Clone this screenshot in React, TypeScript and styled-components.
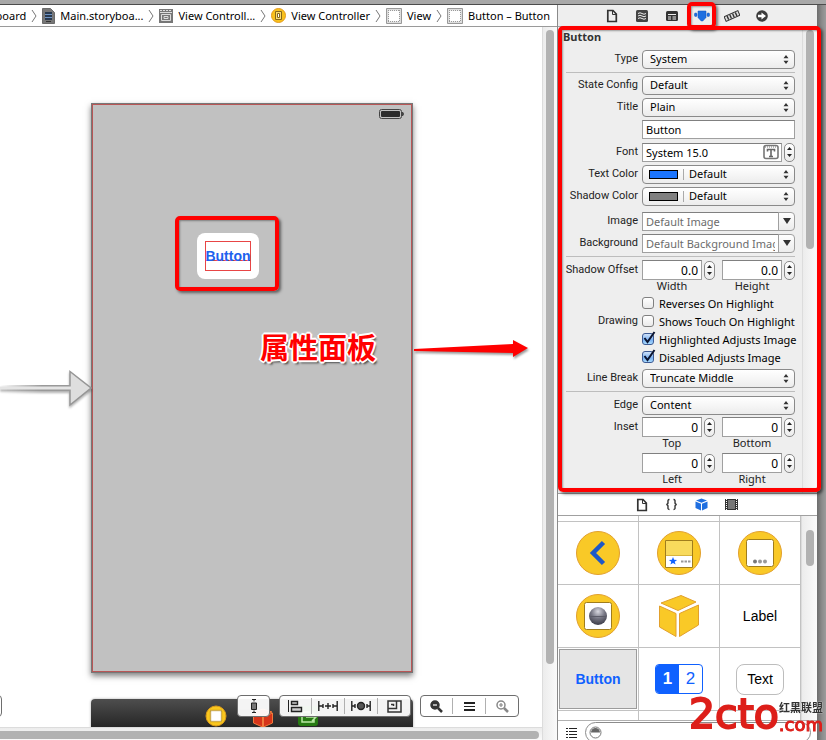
import React from "react";
import styled, { createGlobalStyle, css } from "styled-components";

const ui = `"Noto Sans", "Open Sans", sans-serif`;
const helvetica = `"Liberation Sans", Arial, sans-serif`;
const red = "#ff0000";

const GlobalStyle = createGlobalStyle`
  *, *::before, *::after { box-sizing: border-box; }
  html, body { margin: 0; padding: 0; }
  body { font-family: ${ui}; font-size: 11px; color: #000; background: #fff; overflow: hidden; }
  button, input, select { font: inherit; color: inherit; margin: 0; }
  button { padding: 0; border: 0; background: none; display: block; }
  svg { display: block; flex: none; }
`;

/* ---------- window frame ---------- */

const Window = styled.div`
  height: 100vh;
  display: flex;
  flex-direction: column;
  overflow: hidden;
`;
const TitleEdge = styled.div`
  flex: none;
  height: 5px;
  background: #a8a8a8;
  border-bottom: 1px solid #4c4c4c;
`;
const Body = styled.div`
  flex: 1;
  min-height: 0;
  display: flex;
`;
const Backdrop = styled.div`
  flex: none;
  width: 9px;
  background: linear-gradient(to right, #6c6c6c, #8c8c8c 5px, #9c9c9c);
`;

/* ---------- editor ---------- */

const Editor = styled.main`
  flex: 1;
  min-width: 0;
  display: grid;
  grid-template: 22px minmax(0, 1fr) 13px / minmax(0, 1fr) 15px;
`;
const JumpBar = styled.nav`
  grid-column: 1 / -1;
  display: flex;
  justify-content: flex-end;
  align-items: center;
  gap: 5px;
  padding-right: 7px;
  overflow: hidden;
  border-bottom: 1px solid #9a9a9a;
`;
const Crumb = styled.button`
  flex: none;
  display: flex;
  align-items: center;
  gap: 5px;
  white-space: nowrap;
  line-height: 20px;
`;
const Canvas = styled.section`
  position: relative;
  overflow: hidden;
  background: #fff;
`;
const VTrack = styled.div`
  flex: none;
  width: 15px;
  padding: 3px 3px 0;
  border-left: 1px solid #dcdcdc;
  background: linear-gradient(to right, #ececec, #fafafa);
`;
const EditorVTrack = styled(VTrack)`
  grid-row: 2 / 4;
  grid-column: 2;
  padding-bottom: 76px;
`;
const HTrack = styled.div`
  grid-row: 3;
  grid-column: 1;
  padding: 3px 3px 1px 0;
  border-top: 1px solid #dcdcdc;
  background: linear-gradient(#ececec, #fafafa);
`;
const Thumb = styled.div<{ $h?: number; $end?: boolean }>`
  height: ${(p) => (p.$h ? `${p.$h}px` : "100%")};
  background: #b2b2b2;
  border-radius: ${(p) => (p.$end ? "0 4px 4px 0" : "4px")};
`;

/* Scene objects sit freely on the storyboard canvas */
const Scene = styled.div`
  position: absolute;
  left: 91px;
  top: 76px;
  width: 322px;
  height: 570px;
  border: 1px solid #777;
  background: #c1c1c1;
  box-shadow: inset 0 0 0 1px #b85656, 0 3px 6px rgba(0, 0, 0, 0.5);
`;
const Battery = styled.svg`
  position: absolute;
  right: 7px;
  top: 5px;
`;
const EntryArrow = styled.svg`
  position: absolute;
  left: 0;
  top: 340px;
  filter: drop-shadow(0 2px 1px rgba(0, 0, 0, 0.3));
`;
const Handle = styled.div`
  position: absolute;
  left: 197px;
  top: 206px;
  padding: 8px;
  border-radius: 8px;
  background: #fff;
`;
const CanvasButton = styled.button`
  width: 46px;
  height: 30px;
  border: 1px solid #e84545;
  background: linear-gradient(#e84545, #e84545) 0 18px / 100% 1px no-repeat;
  display: flex;
  justify-content: center;
  align-items: center;
  font: bold 14px / 28px ${helvetica};
  color: #1d62ee;
`;
const Marker = styled.div`
  position: absolute;
  z-index: 5;
  border: 4px solid ${red};
  border-radius: 5px;
  box-shadow: 2px 2px 3px rgba(0, 0, 0, 0.5), inset 1px 1px 2px rgba(0, 0, 0, 0.35);
  pointer-events: none;
`;
const ButtonMarker = styled(Marker)`
  left: 175px;
  top: 189px;
  width: 104px;
  height: 75px;
`;
const Note = styled.p`
  position: absolute;
  left: 260px;
  top: 299px;
  margin: 0;
  font: bold 29px / 40px "Noto Sans CJK SC", sans-serif;
  color: ${red};
  text-shadow: -1px -1px 0 #fff, 1px -1px 0 #fff, -1px 1px 0 #fff, 1px 1px 0 #fff,
    -2px 0 0 #fff, 2px 0 0 #fff, 0 -2px 0 #fff, 0 2px 0 #fff, 2px 3px 2px rgba(0, 0, 0, 0.6);
`;
const NoteArrow = styled.svg`
  position: absolute;
  left: 413px;
  top: 304px;
  filter: drop-shadow(1px 2px 1px rgba(0, 0, 0, 0.4));
`;
const Dock = styled.div`
  position: absolute;
  left: 91px;
  bottom: 0;
  width: 322px;
  height: 28px;
  padding: 5px 95px 0 113px;
  overflow: hidden;
  display: flex;
  justify-content: space-between;
  border-radius: 4px 4px 0 0;
  background: linear-gradient(#4e4e4e, #262626);
  box-shadow: 0 0 2px 1px #d8d8d8;
`;
const CanvasTools = styled.div`
  position: absolute;
  left: -31px;
  right: 23px;
  bottom: 10px;
  display: flex;
  gap: 9px;
`;
const ToolGroup = styled.div<{ $first?: boolean }>`
  display: flex;
  align-items: center;
  height: 22px;
  margin-right: ${(p) => (p.$first ? "auto" : "0")};
  border: 1px solid #6e6e6e;
  border-radius: 4px;
  background: rgba(255, 255, 255, 0.94);
`;
const Tool = styled.button`
  width: 31px;
  height: 16px;
  display: flex;
  align-items: center;
  justify-content: center;
  & + & { width: 33px; border-left: 1px solid #b0b0b0; }
`;

/* ---------- inspector ---------- */

const Inspector = styled.aside`
  flex: none;
  width: 260px;
  border-left: 1px solid #8a8a8a;
  display: flex;
  flex-direction: column;
  background: #eee;
`;
const Tabs = styled.div<{ $white?: boolean }>`
  flex: none;
  height: 22px;
  display: flex;
  justify-content: center;
  align-items: center;
  padding-right: 2px;
  background: ${(p) => (p.$white ? "#fff" : "#eee")};
  border-bottom: 1px solid #a0a0a0;
`;
const Tab = styled.button`
  position: relative;
  width: 30px;
  height: 21px;
  display: flex;
  align-items: center;
  justify-content: center;
`;
const TabMarker = styled(Marker)`
  inset: -3px 1px -3px 0;
`;
const Attributes = styled.div`
  position: relative;
  flex: none;
  display: flex;
  border-bottom: 1px solid #a0a0a0;
`;
const PanelMarker = styled(Marker)`
  inset: -1px -4px 1px 0;
`;
const Form = styled.form`
  flex: 1;
  min-width: 0;
  padding: 0 7px 8px 4px;
`;
const Heading = styled.h2`
  margin: 0;
  height: 19px;
  padding-left: 1px;
  font-size: 11px;
  line-height: 19px;
  font-weight: bold;
  color: #333;
`;
const Rule = styled.hr<{ $after?: number }>`
  height: 1px;
  margin: 2px 0 ${(p) => p.$after ?? 2}px 4px;
  border: 0;
  background: #bdbdbd;
`;
const Row = styled.div<{ $gap?: number; $top?: boolean }>`
  display: grid;
  grid-template-columns: 76px minmax(0, 1fr);
  column-gap: 4px;
  align-items: ${(p) => (p.$top ? "start" : "center")};
  min-height: 22px;
  margin-top: ${(p) => p.$gap ?? 0}px;
`;
const labelText = css`
  font-family: Roboto, "Noto Sans", sans-serif;
  font-size: 11px;
  line-height: 20px;
  color: #222;
  white-space: nowrap;
`;
const Label = styled.label`
  ${labelText}
  text-align: right;
`;
const GroupLabel = styled.span`
  ${labelText}
  text-align: right;
`;
const PopWrap = styled.div`
  position: relative;
  display: flex;
  height: 19px;
`;
const Pop = styled.select<{ $swatch?: boolean }>`
  appearance: none;
  width: 100%;
  height: 19px;
  padding: 0 20px 0 ${(p) => (p.$swatch ? 46 : 7)}px;
  border: 1px solid #8a8a8a;
  border-radius: 4px;
  background: linear-gradient(#fff, #f6f6f6 50%, #ececec);
  line-height: 16px;
`;
const PopArrows = styled.svg`
  position: absolute;
  right: 6px;
  top: 5px;
  pointer-events: none;
`;
const Swatch = styled.span<{ $color: string }>`
  position: absolute;
  left: 7px;
  top: 5px;
  width: 29px;
  height: 9px;
  border: 1px solid #000;
  background: ${(p) => p.$color};
  pointer-events: none;
  &::after {
    content: "";
    position: absolute;
    left: 33px;
    top: -2px;
    width: 1px;
    height: 11px;
    background: #aaa;
  }
`;
const Field = styled.input<{ $num?: boolean }>`
  flex: 1;
  width: 100%;
  min-width: 0;
  height: ${(p) => (p.$num ? 20 : 19)}px;
  padding: 0 3px;
  border: 1px solid #a0a0a0;
  border-top-color: #808080;
  border-radius: 0;
  background: #fff;
  font-size: ${(p) => (p.$num ? 12 : 11)}px;
  text-align: ${(p) => (p.$num ? "right" : "left")};
  &::placeholder { color: #6c6c6c; opacity: 1; }
`;
const Line = styled.div`
  display: flex;
  align-items: center;
`;
const FontBox = styled.div`
  flex: 1;
  min-width: 0;
  display: flex;
  align-items: center;
  height: 19px;
  padding-right: 2px;
  border: 1px solid #a0a0a0;
  border-top-color: #808080;
  background: #fff;
  ${Field} { border: 0; height: 17px; }
`;
const StepButtons = styled.span`
  flex: none;
  display: flex;
  flex-direction: column;
  justify-content: center;
  width: 11px;
  height: 19px;
  margin-left: 2px;
  border: 1px solid #8a8a8a;
  border-radius: 5px;
  background: linear-gradient(#fff, #ececec);
`;
const StepButton = styled.button`
  height: 7px;
  display: flex;
  align-items: center;
  justify-content: center;
`;
const Drop = styled.button`
  flex: none;
  width: 17px;
  height: 19px;
  margin-left: -1px;
  display: flex;
  align-items: center;
  justify-content: center;
  border: 1px solid #a0a0a0;
  border-radius: 0 4px 4px 0;
  background: linear-gradient(#fff, #ececec);
`;
const Pair = styled.div`
  display: grid;
  grid-template-columns: 1fr 1fr;
  column-gap: 7px;
`;
const NumCell = styled.div`
  min-width: 0;
`;
const Caption = styled.label`
  ${labelText}
  display: block;
  font-family: ${ui};
  line-height: 12px;
  padding-right: 13px;
  text-align: center;
`;
const ChecksArea = styled.div`
  display: grid;
  grid-template-columns: 76px minmax(0, 1fr);
  column-gap: 4px;
  align-items: start;
`;
const Checks = styled.div`
  display: grid;
  grid-auto-rows: 18px;
  margin-top: 2px;
`;
const DrawingLabel = styled(GroupLabel)`
  padding-top: 19px;
`;
const CheckItem = styled.label`
  display: flex;
  align-items: center;
  gap: 5px;
  white-space: nowrap;
`;
const Check = styled.input`
  appearance: none;
  flex: none;
  width: 12px;
  height: 12px;
  margin: 0;
  border: 1px solid #808080;
  border-radius: 3px;
  background: linear-gradient(#fff, #eaeaea);
  &:checked {
    border-color: #3c5a94;
    background: linear-gradient(#cfe2fa, #79b0f2 60%, #a9dcff);
  }
`;
const CheckBox = styled.span`
  position: relative;
  display: flex;
`;
const Tick = styled.svg`
  position: absolute;
  left: 1px;
  bottom: 1px;
  pointer-events: none;
`;

/* ---------- library ---------- */

const LibraryBody = styled.div`
  flex: 1;
  min-height: 0;
  display: flex;
  overflow: hidden;
  background: #fff;
`;
const Objects = styled.div`
  flex: 1;
  min-width: 0;
  display: grid;
  grid-template-columns: repeat(3, 1fr);
  grid-template-rows: 6px repeat(3, 63px);
  grid-auto-rows: 63px;
`;
const ObjectCell = styled.button<{ $on?: boolean }>`
  display: flex;
  align-items: center;
  justify-content: center;
  overflow: hidden;
  border: 0 solid #c2c2c2;
  border-width: 0 1px 1px 0;
  font: 14px / 20px ${helvetica};
  ${(p) =>
    p.$on &&
    css`
      font-weight: bold;
      color: #0f61ff;
      background: #e5e5e5;
      box-shadow: inset 0 0 0 1px #fff, inset 0 0 0 2px #9c9c9c;
    `}
`;
const Segments = styled.span`
  display: flex;
  width: 48px;
  height: 30px;
  border: 1px solid #0f61ff;
  border-radius: 4px;
  overflow: hidden;
  background: #fff;
  color: #0f61ff;
  font-size: 17px;
  line-height: 28px;
  b { flex: 1; background: #0f61ff; color: #fff; }
  span { flex: 1; }
`;
const TextObject = styled.span`
  width: 48px;
  height: 31px;
  border: 1px solid #bdbdbd;
  border-radius: 8px;
  line-height: 29px;
`;
const LibraryTrack = styled(VTrack)`
  width: 16px;
  padding-top: 14px;
  padding-left: 4px;
`;
const FilterBar = styled.div`
  flex: none;
  height: 20px;
  display: flex;
  align-items: flex-start;
  gap: 7px;
  padding: 1px 6px 0 8px;
  overflow: hidden;
  background: #fff;
  border-top: 1px solid #b0b0b0;
`;
const ListToggle = styled.button`
  padding-top: 6px;
`;
const SearchBox = styled.label`
  flex: 1;
  display: flex;
  align-items: center;
  gap: 4px;
  height: 21px;
  padding: 0 3px;
  border: 1px solid #8c8c8c;
  border-radius: 11px;
  background: #fff;
  input { flex: 1; min-width: 0; border: 0; background: none; outline: 0; }
`;

/* ---------- site mark ---------- */

const SiteMark = styled.div`
  position: fixed;
  right: 3px;
  bottom: 5px;
  z-index: 9;
  display: flex;
  align-items: flex-end;
  color: #dd1f1a;
  font-family: "DejaVu Sans", sans-serif;
`;
const SiteName = styled.span`
  font-size: 41px;
  line-height: 42px;
  -webkit-text-stroke: 2px #dd1f1a;
`;
const SiteTail = styled.span`
  display: flex;
  flex-direction: column;
`;
const SiteCom = styled.span`
  font-size: 18px;
  line-height: 21px;
  -webkit-text-stroke: 1px #dd1f1a;
`;
const SiteChinese = styled.span`
  font: bold 11px / 14px "Noto Sans CJK SC", sans-serif;
  color: #333;
  text-align: right;
  text-shadow: 0 0 1px #fff, 0 0 1px #fff;
`;

/* ---------- drawings ---------- */

const Chevron = () => (
  <svg width="6" height="14" viewBox="0 0 6 14" fill="none" stroke="#777">
    <path d="M1 1 5 7 1 13" />
  </svg>
);
const FileIcon = () => (
  <svg width="13" height="16" viewBox="0 0 13 16">
    <path d="M.5.5h8l4 4v11H.5z" fill="#777" stroke="#6a6a6a" />
    <path d="M3 4h7v8H3z" fill="#28394f" />
    <path d="M3 6.500h7M3 9.500h7" stroke="#6e93c4" />
    <path d="M4 13.500h5" stroke="#333" />
  </svg>
);
const SceneIcon = () => (
  <svg width="14" height="14" viewBox="0 0 14 14">
    <path d="M0 0h14v14H0z" fill="#777" />
    <path d="M1 3.500h12" stroke="#ddd" />
    <path d="M1 1.500h12" stroke="#ddd" strokeDasharray="2 1" />
    <path d="M2.500 5.500h9v6h-9z" fill="#777" stroke="#ddd" />
    <path d="M5 7.500h4v2H5z" fill="none" stroke="#ddd" />
  </svg>
);
const ControllerIcon = () => (
  <svg width="15" height="15" viewBox="0 0 15 15">
    <circle cx="7.500" cy="7.500" r="7" fill="#f8c11c" stroke="#e39a1c" />
    <path d="M4.500 3.500h6v8h-6z" fill="#fbdc6c" stroke="#85661b" />
    <path d="M6.500 5.500h2v4h-2z" fill="#fff" stroke="#85661b" />
  </svg>
);
const ViewIcon = () => (
  <svg width="16" height="16" viewBox="0 0 16 16">
    <path d="M.5.500h15v15H.5z" fill="#ddd" stroke="#999" />
    <path d="M2.500 2.500h11v11h-11z" fill="#fff" />
    <path d="M2 2.500h12M2 13.500h12M2.500 2v12M13.500 2v12" stroke="#999" strokeDasharray="1 1" />
  </svg>
);
const PageIcon = () => (
  <svg width="12" height="14" viewBox="0 0 12 14" fill="none" stroke="#333">
    <path d="M1.800 1.500h5.200l3.300 3.500v7.500H1.800z" strokeWidth="1.700" />
    <path d="M6.500 2v3.500H10" />
  </svg>
);
const HelpIcon = () => (
  <svg width="12" height="12" viewBox="0 0 12 12">
    <rect width="12" height="12" rx="1.500" fill="#444" />
    <path d="M2 3.500q2-1.500 4 0t4 0M2 6q2-1.500 4 0t4 0M2 8.500q2-1.500 4 0t4 0" fill="none" stroke="#eee" />
  </svg>
);
const IdentityIcon = () => (
  <svg width="12" height="10" viewBox="0 0 12 10">
    <rect width="12" height="10" rx="1.500" fill="#333" />
    <path d="M2 3.500h8M2 6h3M2 8h3M6.500 6H10M6.500 8H10" stroke="#eee" />
  </svg>
);
const AttributesIcon = () => (
  <svg width="16" height="12" viewBox="0 0 16 12" fill="#1f6fe0" stroke="#1252b8" strokeWidth=".5">
    <path d="M4 1h8v6.500L8.800 11H7.200L4 7.500z" />
    <rect x=".5" y="3" width="2.500" height="3.500" rx="1" />
    <rect x="13" y="3" width="2.500" height="3.500" rx="1" />
  </svg>
);
const SizeIcon = () => (
  <svg width="16" height="12" viewBox="0 0 16 12">
    <g transform="rotate(-24 8 6)">
      <path d="M.5 3.500h15v5H.5z" fill="#ddd" stroke="#333" />
      <path d="M3.500 4v4M6.500 4v4M9.500 4v4M12.500 4v4" stroke="#333" strokeWidth="1.400" />
    </g>
  </svg>
);
const ConnectIcon = () => (
  <svg width="12" height="12" viewBox="0 0 12 12">
    <circle cx="6" cy="6" r="5.800" fill="#3c3c3c" />
    <path d="M2 4.800h3.500V2.500L10 6 5.500 9.500V7.200H2z" fill="#fff" />
  </svg>
);
const BracesIcon = () => (
  <svg width="13" height="13" viewBox="0 0 13 13" fill="none" stroke="#333" strokeWidth="1.400">
    <path d="M4.500 1.500C2.500 1.500 3 3 3 4.500S2.500 6.500 1.200 6.500C2.500 6.500 3 7 3 8.500s-.5 3 1.500 3M8.500 1.500c2 0 1.500 1.500 1.500 3s.5 2 1.800 2c-1.300 0-1.800.5-1.800 2s.5 3-1.500 3" />
  </svg>
);
const CubeIcon = () => (
  <svg width="13" height="13" viewBox="0 0 13 13" fill="#1f6fe0">
    <path d="m6.500.5 5.500 2-5.500 2.300L1 2.500zM.5 3.500 6 5.800v6.700L.5 10zM12.500 3.500 7 5.800v6.700l5.500-2.500z" />
  </svg>
);
const FilmIcon = () => (
  <svg width="13" height="11" viewBox="0 0 13 11">
    <path d="M0 0h13v11H0z" fill="#333" />
    <path d="M3 1h7v9H3z" fill="#777" />
    <path d="M1.500 0v11M11.500 0v11" stroke="#fff" strokeDasharray="1 1" />
  </svg>
);
const FontIcon = () => (
  <svg width="16" height="16" viewBox="0 0 16 16" fill="none" stroke="#777">
    <rect x="1" y="1.500" width="14" height="13" rx="2" strokeWidth="1.600" />
    <path d="M2 3h12" strokeDasharray="1 1" />
    <path d="M4.500 7.500v-2h7v2M8 5.500v7M6 12.500h4" stroke="#666" strokeWidth="1.600" />
  </svg>
);
const ListIcon = () => (
  <svg width="12" height="11" viewBox="0 0 12 11" stroke="#222">
    <path d="M0 .5h2M0 3.500h2M0 6.500h2M0 9.500h2M3 .5h8M3 3.500h8M3 6.500h8M3 9.500h8" />
  </svg>
);
const FilterIcon = () => (
  <svg width="13" height="13" viewBox="0 0 13 13">
    <circle cx="6.500" cy="6.500" r="5.500" fill="#fff" stroke="#777" />
    <path d="M2 6.500a4.500 4.500 0 0 1 9 0z" fill="#666" />
  </svg>
);

const Disc = ({ children }: { children: React.ReactNode }) => (
  <svg width="46" height="46" viewBox="0 0 46 46">
    <circle cx="23" cy="23" r="21.500" fill="#f9c927" stroke="#e2a02c" />
    {children}
  </svg>
);
const BackObject = () => (
  <Disc>
    <path d="M28.500 12.500 18 23l10.500 10.500" fill="none" stroke="#1d58c8" strokeWidth="4.500" />
  </Disc>
);
const TabBarObject = () => (
  <Disc>
    <path d="M9.500 10.500h27v27h-27z" fill="#fff" stroke="#a07d1c" />
    <path d="M10 11h26v14H10z" fill="#f8da5c" />
    <path d="M10 25.500h26" stroke="#d8b43c" />
    <path d="m17 27 1.100 2.800 3 .1-2.400 1.800.9 2.900-2.600-1.700-2.600 1.700.9-2.900-2.400-1.800 3-.1z" fill="#0f61ff" />
    <path d="M25 31.500h2.500M28.500 31.500H31M32 31.500h2.500" stroke="#999" strokeWidth="2" />
  </Disc>
);
const ToolBarObject = () => (
  <Disc>
    <rect x="9.500" y="9.500" width="27" height="27" rx="2" fill="#fff" stroke="#a07d1c" />
    <circle cx="18" cy="31.500" r="2" fill="#777" />
    <circle cx="23" cy="31.500" r="2" fill="#999" />
    <circle cx="28" cy="31.500" r="2" fill="#999" />
  </Disc>
);
const PageObject = () => (
  <Disc>
    <defs>
      <radialGradient id="ball" cx=".5" cy=".25" r=".75">
        <stop offset="0" stopColor="#d8d8e0" />
        <stop offset=".5" stopColor="#777784" />
        <stop offset="1" stopColor="#3c3c48" />
      </radialGradient>
    </defs>
    <rect x="9.500" y="9.500" width="27" height="27" rx="2" fill="#fff" stroke="#a07d1c" />
    <circle cx="23" cy="23" r="9" fill="url(#ball)" />
    <path d="M15 23.500h16" stroke="#5c5c68" />
  </Disc>
);
const CubeObject = () => (
  <svg width="42" height="44" viewBox="0 0 42 44" fill="#f9c927" stroke="#e2a02c">
    <path d="M23 1.500 38 8 20 16.500 3 9zM1.500 12 18 19.500v23L1.500 33zM40.500 11 21.500 19.500v23L40.500 31z" />
  </svg>
);

const AlignIcon = () => (
  <svg width="15" height="14" viewBox="0 0 15 14" fill="#ccc" stroke="#222">
    <path d="M.5 1v12" />
    <path d="M3.500 2.500h6v3h-6zM3.500 8.500h10v4h-10z" strokeWidth="1.400" />
  </svg>
);
const PinIcon = () => (
  <svg width="20" height="12" viewBox="0 0 20 12" stroke="#222" strokeWidth="1.400">
    <path d="M.8 1v10M19.200 1v10M1 6h4M5 4v4M15 4v4M15 6h4M7 6h6M10 3v6" />
  </svg>
);
const ResolveIcon = () => (
  <svg width="20" height="12" viewBox="0 0 20 12" stroke="#222" strokeWidth="1.400">
    <path d="M.8 1v10M19.200 1v10M1 6h3M4 4v4M16 4v4M16 6h3" />
    <circle cx="10" cy="6" r="3.500" fill="#555" />
  </svg>
);
const ResizeIcon = () => (
  <svg width="15" height="13" viewBox="0 0 15 13" fill="none" stroke="#333" strokeWidth="1.500">
    <path d="M1 1h13v11H1zM1 8.500h8.500V1M4 4.500h2.500V6" />
  </svg>
);
const DocIcon = () => (
  <svg width="8" height="14" viewBox="0 0 8 14" stroke="#222">
    <path d="M1.500 4h5v6.500h-5z" fill="#777" />
    <path d="M2 .5h4M4 1v1.500M2 13.500h4M4 11.500V13" />
  </svg>
);
const ZoomIcon = ({ plus, color }: { plus?: boolean; color: string }) => (
  <svg width="13" height="13" viewBox="0 0 13 13" fill="none" stroke={color} strokeWidth="1.500">
    <circle cx="5" cy="5" r="4" fill={plus ? "none" : color} />
    <path d="m8 8 4 4" strokeWidth="2.500" />
    <path d={plus ? "M3 5h4M5 3v4" : "M3 5h4"} stroke={plus ? color : "#fff"} strokeWidth="1.200" />
  </svg>
);
const EqualIcon = () => (
  <svg width="11" height="9" viewBox="0 0 11 9" fill="#222">
    <path d="M0 0h11v2H0zM0 4h11v1H0zM0 7h11v2H0z" />
  </svg>
);

/* ---------- composed controls ---------- */

function Popup(props: { id: string; value: string; swatch?: string }) {
  return (
    <PopWrap>
      <Pop id={props.id} defaultValue={props.value} $swatch={!!props.swatch}>
        <option>{props.value}</option>
      </Pop>
      {props.swatch && <Swatch $color={props.swatch} />}
      <PopArrows width="6" height="9" viewBox="0 0 6 9" fill="#333">
        <path d="M3 0l2.500 3.200h-5zM3 9l2.500-3.200h-5z" />
      </PopArrows>
    </PopWrap>
  );
}
function PopupRow(props: { id: string; label: string; value: string; swatch?: string; gap?: number }) {
  return (
    <Row $gap={props.gap}>
      <Label htmlFor={props.id}>{props.label}</Label>
      <Popup id={props.id} value={props.value} swatch={props.swatch} />
    </Row>
  );
}
function Stepper({ name }: { name: string }) {
  return (
    <StepButtons>
      <StepButton type="button" aria-label={`Increase ${name}`}>
        <svg width="5" height="3" viewBox="0 0 5 3" fill="#222"><path d="M0 3h5L2.500 0z" /></svg>
      </StepButton>
      <StepButton type="button" aria-label={`Decrease ${name}`}>
        <svg width="5" height="3" viewBox="0 0 5 3" fill="#222"><path d="M0 0h5L2.500 3z" /></svg>
      </StepButton>
    </StepButtons>
  );
}
function NumberCell(props: { name: string; value: string }) {
  const id = `num-${props.name}`;
  return (
    <NumCell>
      <Line>
        <Field id={id} defaultValue={props.value} $num />
        <Stepper name={props.name} />
      </Line>
      <Caption htmlFor={id}>{props.name}</Caption>
    </NumCell>
  );
}
function ComboRow(props: { id: string; label: string; hint: string; gap?: number }) {
  return (
    <Row $gap={props.gap}>
      <Label htmlFor={props.id}>{props.label}</Label>
      <Line>
        <Field id={props.id} placeholder={props.hint} />
        <Drop type="button" aria-label={`Choose ${props.label}`}>
          <svg width="8" height="6" viewBox="0 0 8 6" fill="#333"><path d="M0 0h8L4 6z" /></svg>
        </Drop>
      </Line>
    </Row>
  );
}
function CheckOption({ label, on }: { label: string; on?: boolean }) {
  return (
    <CheckItem>
      <CheckBox>
        <Check type="checkbox" defaultChecked={on} />
        {on && (
          <Tick width="13" height="13" viewBox="0 0 13 13" fill="none" stroke="#0b1430" strokeWidth="2">
            <path d="M1.500 7 4.500 11 11.500 1" />
          </Tick>
        )}
      </CheckBox>
      {label}
    </CheckItem>
  );
}

const crumbs: { text: string; icon?: React.ReactNode }[] = [
  { text: "board" },
  { text: "Main.storyboa...", icon: <FileIcon /> },
  { text: "View Controll...", icon: <SceneIcon /> },
  { text: "View Controller", icon: <ControllerIcon /> },
  { text: "View", icon: <ViewIcon /> },
  { text: "Button – Button", icon: <ViewIcon /> },
];

const inspectorTabs: [string, React.ReactNode][] = [
  ["File", <PageIcon />],
  ["Quick Help", <HelpIcon />],
  ["Identity", <IdentityIcon />],
  ["Attributes", <AttributesIcon />],
  ["Size", <SizeIcon />],
  ["Connections", <ConnectIcon />],
];
const libraryTabs: [string, React.ReactNode][] = [
  ["File templates", <PageIcon />],
  ["Snippets", <BracesIcon />],
  ["Objects", <CubeIcon />],
  ["Media", <FilmIcon />],
];

export default function App() {
  return (
    <Window>
      <GlobalStyle />
      <TitleEdge />
      <Body>
        <Editor>
          <JumpBar aria-label="Jump bar">
            {crumbs.map((c, i) => (
              <React.Fragment key={i}>
                {i > 0 && <Chevron />}
                <Crumb type="button">
                  {c.icon}
                  {c.text}
                </Crumb>
              </React.Fragment>
            ))}
          </JumpBar>
          <Canvas>
            <Scene>
              <Battery width="26" height="10" viewBox="0 0 26 10">
                <rect x=".5" y=".5" width="22" height="9" rx="2" fill="#c1c1c1" stroke="#444" />
                <rect x="2" y="2" width="19" height="6" rx="1" fill="#2c2c2c" />
                <path d="M23.500 3q2 2 0 4z" fill="#444" stroke="#444" />
              </Battery>
            </Scene>
            <EntryArrow width="92" height="42" viewBox="0 0 92 42">
              <defs>
                <linearGradient id="shaft" x1="0" x2="1">
                  <stop offset="0" stopColor="#999" stopOpacity="0" />
                  <stop offset=".6" stopColor="#999" />
                </linearGradient>
              </defs>
              <path d="M70 4.500 91 21 70 38z" fill="#dedede" stroke="#969696" strokeWidth="1.500" />
              <path d="M0 18h70v6H0z" fill="url(#shaft)" />
              <path d="M0 19.500h71v3H0z" fill="#e4e4e4" />
            </EntryArrow>
            <Handle>
              <CanvasButton type="button">Button</CanvasButton>
            </Handle>
            <ButtonMarker />
            <Note>属性面板</Note>
            <NoteArrow width="118" height="36" viewBox="0 0 118 36" fill={red}>
              <path d="M1 18 100 13V9l15 8-15 9v-4L1 20z" />
            </NoteArrow>
            <Dock>
              <svg width="24" height="24" viewBox="0 0 24 24">
                <circle cx="12" cy="12" r="10" fill="#fac71e" stroke="#d99a1c" />
                <path d="M6.500 6.500h11v11h-11z" fill="#fff" stroke="#a37b17" strokeWidth="1.500" strokeDasharray="1 1" />
              </svg>
              <svg width="22" height="24" viewBox="0 0 22 24" fill="#d63419" stroke="#f07a3c">
                <path d="m11 5 9 3-9 4-9-4zM1.500 9l9 4v10l-9-4zM20.500 9l-9 4v10l9-4z" />
              </svg>
              <svg width="20" height="24" viewBox="0 0 20 24">
                <rect y="2" width="20" height="20" rx="3" fill="#267a12" />
                <path d="M12 8H4v10h12v-3M8 13h9M14 9l4 4-4 4" fill="none" stroke="#b9e8a4" strokeWidth="1.500" />
              </svg>
            </Dock>
            <CanvasTools>
              <ToolGroup $first><Tool type="button" aria-label="Outline" /></ToolGroup>
              <ToolGroup><Tool type="button" aria-label="Form factor"><DocIcon /></Tool></ToolGroup>
              <ToolGroup>
                <Tool type="button" aria-label="Align"><AlignIcon /></Tool>
                <Tool type="button" aria-label="Pin"><PinIcon /></Tool>
                <Tool type="button" aria-label="Resolve"><ResolveIcon /></Tool>
                <Tool type="button" aria-label="Resizing"><ResizeIcon /></Tool>
              </ToolGroup>
              <ToolGroup>
                <Tool type="button" aria-label="Zoom out"><ZoomIcon color="#333" /></Tool>
                <Tool type="button" aria-label="Actual size"><EqualIcon /></Tool>
                <Tool type="button" aria-label="Zoom in"><ZoomIcon plus color="#888" /></Tool>
              </ToolGroup>
            </CanvasTools>
          </Canvas>
          <EditorVTrack><Thumb /></EditorVTrack>
          <HTrack><Thumb $end /></HTrack>
        </Editor>

        <Inspector>
          <Tabs>
            {inspectorTabs.map(([name, icon]) => (
              <Tab key={name} type="button" aria-label={name}>
                {icon}
                {name === "Attributes" && <TabMarker />}
              </Tab>
            ))}
          </Tabs>
          <Attributes>
            <Form>
              <Heading>Button</Heading>
              <PopupRow id="type" label="Type" value="System" gap={2} />
              <Rule $after={1} />
              <PopupRow id="state" label="State Config" value="Default" />
              <PopupRow id="title" label="Title" value="Plain" />
              <Row>
                <span />
                <Field aria-label="Title text" defaultValue="Button" />
              </Row>
              <Row $gap={1}>
                <Label htmlFor="font">Font</Label>
                <Line>
                  <FontBox>
                    <Field id="font" defaultValue="System 15.0" />
                    <FontIcon />
                  </FontBox>
                  <Stepper name="Font" />
                </Line>
              </Row>
              <PopupRow id="text-color" label="Text Color" value="Default" swatch="#1b75ff" />
              <PopupRow id="shadow-color" label="Shadow Color" value="Default" swatch="#808080" />
              <ComboRow id="image" label="Image" hint="Default Image" gap={3} />
              <ComboRow id="background" label="Background" hint="Default Background Image" />
              <Rule $after={3} />
              <Row $top>
                <GroupLabel>Shadow Offset</GroupLabel>
                <Pair>
                  <NumberCell name="Width" value="0.0" />
                  <NumberCell name="Height" value="0.0" />
                </Pair>
              </Row>
              <ChecksArea>
                <DrawingLabel>Drawing</DrawingLabel>
                <Checks>
                  <CheckOption label="Reverses On Highlight" />
                  <CheckOption label="Shows Touch On Highlight" />
                  <CheckOption label="Highlighted Adjusts Image" on />
                  <CheckOption label="Disabled Adjusts Image" on />
                </Checks>
              </ChecksArea>
              <PopupRow id="line-break" label="Line Break" value="Truncate Middle" gap={1} />
              <Rule />
              <PopupRow id="edge" label="Edge" value="Content" />
              <Row $top $gap={1}>
                <GroupLabel>Inset</GroupLabel>
                <Pair>
                  <NumberCell name="Top" value="0" />
                  <NumberCell name="Bottom" value="0" />
                </Pair>
              </Row>
              <Row $top $gap={4}>
                <span />
                <Pair>
                  <NumberCell name="Left" value="0" />
                  <NumberCell name="Right" value="0" />
                </Pair>
              </Row>
            </Form>
            <VTrack><Thumb $h={219} /></VTrack>
            <PanelMarker />
          </Attributes>

          <Tabs $white>
            {libraryTabs.map(([name, icon]) => (
              <Tab key={name} type="button" aria-label={name}>{icon}</Tab>
            ))}
          </Tabs>
          <LibraryBody>
            <Objects>
              <ObjectCell aria-label="Previous object 1" />
              <ObjectCell aria-label="Previous object 2" />
              <ObjectCell aria-label="Previous object 3" />
              <ObjectCell aria-label="Navigation item"><BackObject /></ObjectCell>
              <ObjectCell aria-label="Tab bar controller"><TabBarObject /></ObjectCell>
              <ObjectCell aria-label="Toolbar controller"><ToolBarObject /></ObjectCell>
              <ObjectCell aria-label="Page controller"><PageObject /></ObjectCell>
              <ObjectCell aria-label="Object"><CubeObject /></ObjectCell>
              <ObjectCell>Label</ObjectCell>
              <ObjectCell $on>Button</ObjectCell>
              <ObjectCell>
                <Segments><b>1</b><span>2</span></Segments>
              </ObjectCell>
              <ObjectCell><TextObject>Text</TextObject></ObjectCell>
              <ObjectCell aria-label="Next object 1" />
              <ObjectCell aria-label="Next object 2" />
              <ObjectCell aria-label="Next object 3" />
            </Objects>
            <LibraryTrack><Thumb $h={36} /></LibraryTrack>
          </LibraryBody>
          <FilterBar>
            <ListToggle type="button" aria-label="List view"><ListIcon /></ListToggle>
            <SearchBox>
              <FilterIcon />
              <input aria-label="Filter objects" />
            </SearchBox>
          </FilterBar>
        </Inspector>
        <Backdrop />
      </Body>
      <SiteMark>
        <SiteName>2cto</SiteName>
        <SiteTail>
          <SiteChinese>红黑联盟</SiteChinese>
          <SiteCom>.com</SiteCom>
        </SiteTail>
      </SiteMark>
    </Window>
  );
}
